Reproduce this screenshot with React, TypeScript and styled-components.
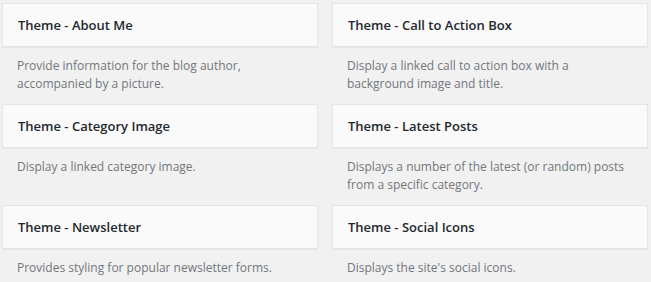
import React from 'react';
import styled, { createGlobalStyle } from 'styled-components';

const GlobalStyle = createGlobalStyle`
  html, body {
    margin: 0;
    padding: 0;
    background: #f1f1f1;
  }
  body {
    font-family: "Open Sans", "Noto Sans", sans-serif;
  }
`

const WidgetGrid = styled.div`
  display: grid;
  grid-template-columns: 1fr 1fr;
  column-gap: 14px;
  row-gap: 11px;
  padding: 3px 3px 0 2px;
`

const Widget = styled.div`
  display: flex;
  flex-direction: column;
`

const WidgetTop = styled.div`
  height: 42px;
  display: flex;
  align-items: center;
  background: #fafafa;
  border: 1px solid #e5e5e5;
  box-shadow: 0 1px 1px rgba(0, 0, 0, 0.04);
  padding: 0 15px;
`

const WidgetTitle = styled.h3`
  margin: 0;
  font-size: 13px;
  font-weight: 600;
  color: #23282d;
  line-height: 1;
`

const Description = styled.div`
  padding: 10px 15px 0;
  font-size: 12px;
  line-height: 18px;
  color: #72777c;
`

const widgets = [
  { title: 'Theme - About Me', desc: 'Provide information for the blog author, accompanied by a picture.' },
  { title: 'Theme - Call to Action Box', desc: 'Display a linked call to action box with a background image and title.' },
  { title: 'Theme - Category Image', desc: 'Display a linked category image.' },
  { title: 'Theme - Latest Posts', desc: 'Displays a number of the latest (or random) posts from a specific category.' },
  { title: 'Theme - Newsletter', desc: 'Provides styling for popular newsletter forms.' },
  { title: 'Theme - Social Icons', desc: "Displays the site's social icons." },
]

function App() {
  return (
    <>
      <GlobalStyle />
      <WidgetGrid>
        {widgets.map((w) => (
          <Widget key={w.title}>
            <WidgetTop>
              <WidgetTitle>{w.title}</WidgetTitle>
            </WidgetTop>
            <Description>{w.desc}</Description>
          </Widget>
        ))}
      </WidgetGrid>
    </>
  );
}

export default App;
